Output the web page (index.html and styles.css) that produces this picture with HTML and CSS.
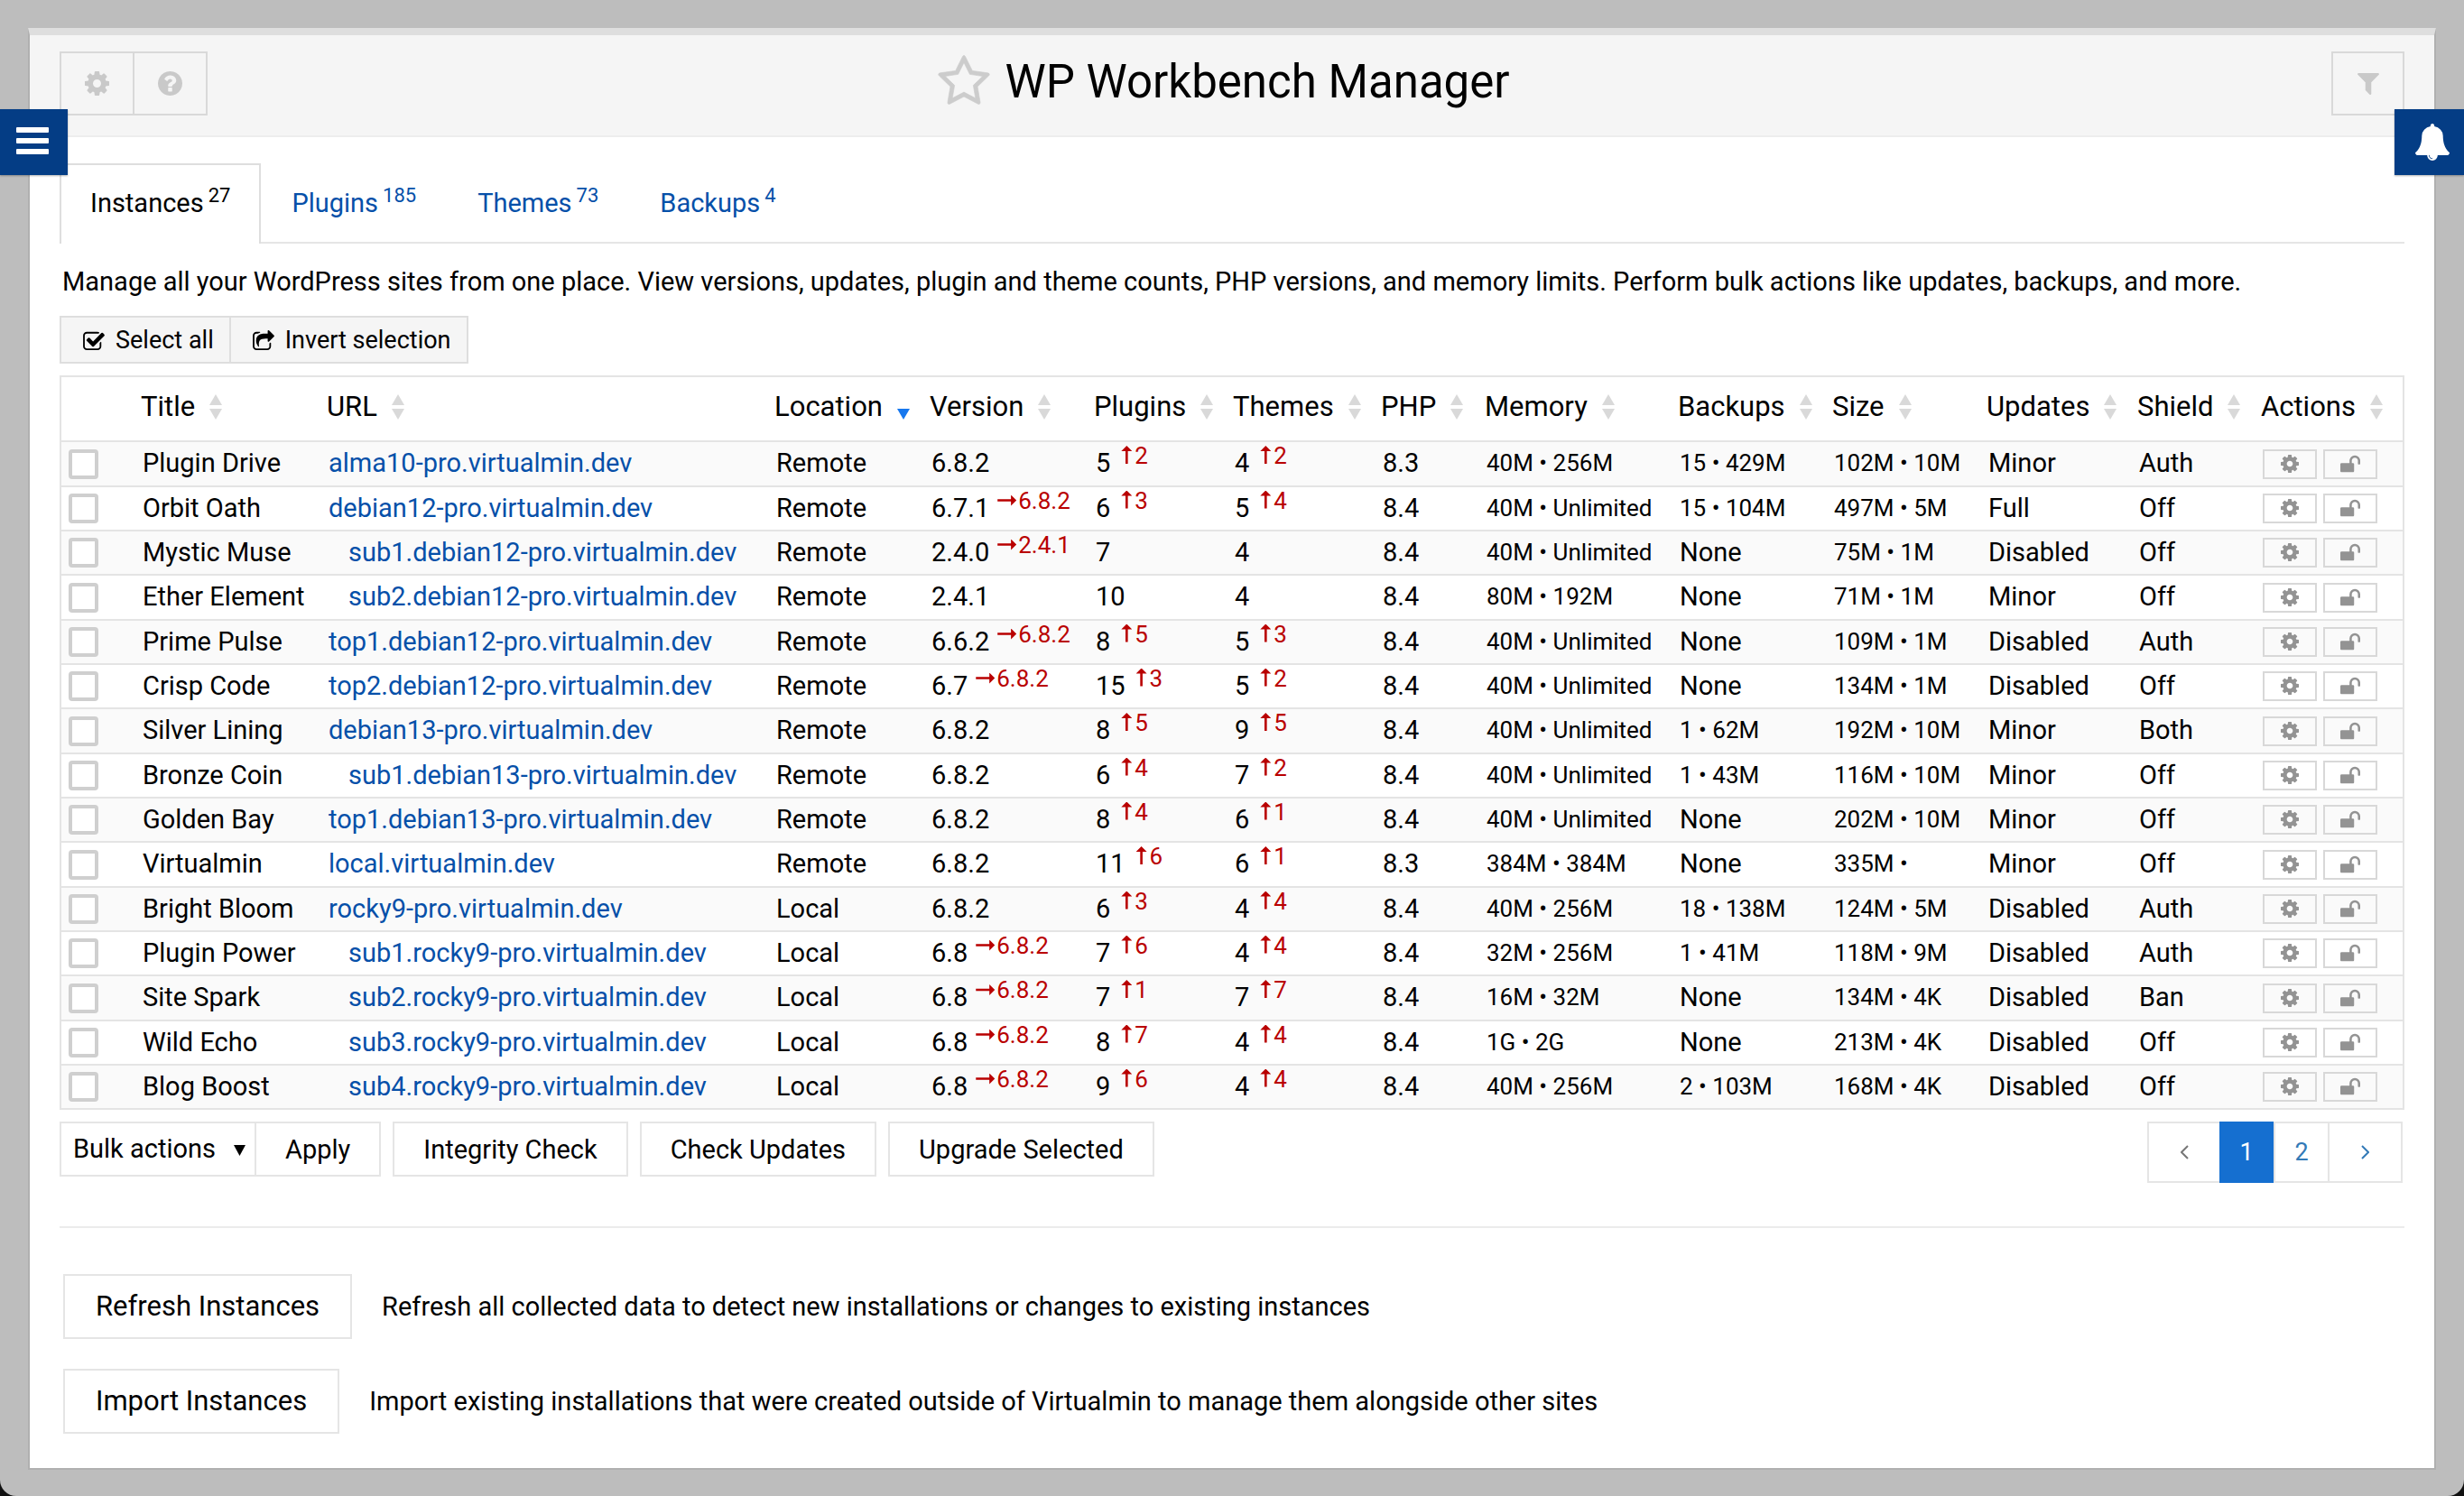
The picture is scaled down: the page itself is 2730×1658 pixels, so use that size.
FILE: index.html
```html
<!DOCTYPE html>
<html lang="en">
<head>
<meta charset="utf-8">
<title>WP Workbench Manager</title>
<link rel="stylesheet" href="styles.css">
</head>
<body>
<svg class="sprite" aria-hidden="true">
  <symbol id="cog" viewBox="0 128 1536 1536"><path fill-rule="evenodd" d="M1024 896q0 106-75 181t-181 75-181-75-75-181 75-181 181-75 181 75 75 181zm512-109v222q0 12-8 23t-20 13l-185 28q-19 54-39 91 35 50 107 138 10 12 10 25t-9 23q-27 37-99 108t-94 71q-12 0-26-9l-138-108q-44 23-91 38-16 136-29 186-7 28-36 28h-222q-14 0-24.5-8.5t-11.500-21.500l-28-184q-49-16-90-37l-141 107q-10 9-25 9-14 0-25-11-126-114-165-168-7-10-7-23 0-12 8-23 15-21 51-66.500t54-70.500q-27-50-41-99l-183-27q-13-2-21-12.500t-8-23.500v-222q0-12 8-23t19-13l186-28q14-46 39-92-40-57-107-138-10-12-10-24 0-10 9-23 26-36 98.500-107.500t94.500-71.500q13 0 26 10l138 107q44-23 91-38 16-136 29-186 7-28 36-28h222q14 0 24.500 8.500t11.500 21.500l28 184q49 16 90 37l142-107q9-9 24-9 13 0 25 10 129 119 165 170 7 8 7 22 0 12-8 23-15 21-51 66.500t-54 70.500q26 50 41 98l183 28q13 2 21 12.500t8 23.500z"/></symbol>
  <symbol id="help" viewBox="128 128 1536 1536"><path d="M1024 1376v-192q0-14-9-23t-23-9h-192q-14 0-23 9t-9 23v192q0 14 9 23t23 9h192q14 0 23-9t9-23zm256-672q0-88-55.500-163t-138.500-116-170-41q-243 0-371 213-15 24 8 42l132 100q7 6 19 6 16 0 25-12 53-68 86-92 34-24 86-24 48 0 85.500 26t37.500 59q0 38-20 61t-68 45q-63 28-115.500 86.500t-52.500 125.500v36q0 14 9 23t23 9h192q14 0 23-9t9-23q0-19 21.500-49.500t54.500-49.500q32-18 49-28.500t46-35 44.500-48 28-60.500 12.500-81zm384 192q0 209-103 385.500t-279.500 279.500-385.500 103-385.500-103-279.500-279.500-103-385.500 103-385.500 279.500-279.500 385.500-103 385.500 103 279.500 279.500 103 385.500z"/></symbol>
  <symbol id="filter" viewBox="192 256 1408 1408"><path d="M1595 295q17 41-14 70l-493 493v742q0 42-39 59-13 5-25 5-27 0-45-19l-256-256q-19-19-19-45v-486l-493-493q-31-29-14-70 17-39 59-39h1280q42 0 59 39z"/></symbol>
  <symbol id="bell" viewBox="64 0 1664 1792"><path d="M912 1696q0-16-16-16-59 0-101.500-42.500t-42.500-101.500q0-16-16-16t-16 16q0 73 51.500 124.500t124.500 51.500q16 0 16-16zm816-288q0 52-38 90t-90 38h-448q0 106-75 181t-181 75-181-75-75-181h-448q-52 0-90-38t-38-90q50-42 91-88t85-119.500 74.500-158.500 50-206 19.500-260q0-152 117-282.500t307-158.500q-8-19-8-39 0-40 28-68t68-28 68 28 28 68q0 20-8 39 190 28 307 158.500t117 282.500q0 139 19.500 260t50 206 74.500 158.500 85 119.500 91 88z"/></symbol>
  <symbol id="unlock" viewBox="64 128 1664 1408"><path d="M1728 576v256q0 26-19 45t-45 19h-64q-26 0-45-19t-19-45v-256q0-106-75-181t-181-75-181 75-75 181v192h96q40 0 68 28t28 68v576q0 40-28 68t-68 28h-960q-40 0-68-28t-28-68v-576q0-40 28-68t68-28h672v-192q0-185 131.500-316.500t316.500-131.500 316.500 131.500 131.500 316.500z"/></symbol>
  <symbol id="check" viewBox="64 0 1664 1536"><path d="M1472 930v318q0 119-84.500 203.500t-203.500 84.500h-832q-119 0-203.500-84.500t-84.500-203.500v-832q0-119 84.500-203.500t203.500-84.500h832q63 0 117 25 15 7 18 23 3 17-9 29l-49 49q-10 10-23 10-3 0-9-2-23-6-45-6h-832q-66 0-113 47t-47 113v832q0 66 47 113t113 47h832q66 0 113-47t47-113v-254q0-13 9-22l64-64q10-10 23-10 6 0 12 3 20 8 20 29zm231-489l-814 814q-24 24-57 24t-57-24l-430-430q-24-24-24-57t24-57l110-110q24-24 57-24t57 24l263 263 647-647q24-24 57-24t57 24l110 110q24 24 24 57t-24 57z"/></symbol>
  <symbol id="share" viewBox="64 0 1664 1536"><path d="M1472 989v259q0 119-84.500 203.500t-203.500 84.500h-832q-119 0-203.500-84.500t-84.500-203.500v-832q0-119 84.500-203.500t203.500-84.500h255q13 0 22.500 9.500t9.500 22.500q0 27-26 32-77 26-133 60-10 4-16 4h-112q-66 0-113 47t-47 113v832q0 66 47 113t113 47h832q66 0 113-47t47-113v-214q0-19 18-29 28-13 54-37 16-16 35-8 21 9 21 31zm237-496l-384 384q-18 19-45 19-12 0-25-5-39-17-39-59v-192h-160q-323 0-438 131-119 137-74 473 3 23-20 34-8 2-12 2-16 0-26-13-10-14-21-31t-39.500-68.500-49.500-99.500-38.500-114-17.500-122q0-49 3.500-91t14-90 28-88 47-81.500 68.500-74 94.500-61.500 124.500-48.500 159.500-30.500 196.500-11h160v-192q0-42 39-59 13-5 25-5 26 0 45 19l384 384q19 19 19 45t-19 45z"/></symbol>
  <symbol id="star" viewBox="48 16 1696 1619"><path d="M1201 1004l306-297-422-62-189-382-189 382-422 62 306 297-73 421 378-199 377 199zm527-357q0 22-26 48l-363 354 86 500q1 7 1 20 0 50-41 50-19 0-40-12l-449-236-449 236q-22 12-40 12-21 0-31.500-14.500t-10.500-35.500q0-6 2-20l86-500-364-354q-25-27-25-48 0-37 56-46l502-73 225-455q19-41 49-41t49 41l225 455 502 73q56 9 56 46z" stroke="currentColor" stroke-width="20"/></symbol>
  <symbol id="sort" viewBox="0 0 14 28"><path d="M7 0l7 12H0z"/><path d="M0 16h14L7 28z"/></symbol>
  <symbol id="sort-down" viewBox="0 0 14 28"><path d="M0 16h14L7 28z"/></symbol>
</svg>

<button class="side side-menu" type="button" aria-label="Menu"><span></span><span></span><span></span></button>
<button class="side side-bell" type="button" aria-label="Notifications"><svg><use href="#bell"/></svg></button>

<div class="panel">
  <header class="head">
    <div class="head-tools">
      <button type="button" aria-label="Settings"><svg><use href="#cog"/></svg></button>
      <button type="button" aria-label="Help"><svg><use href="#help"/></svg></button>
    </div>
    <h1><svg class="star"><use href="#star"/></svg>WP Workbench Manager</h1>
    <div class="head-tools head-right">
      <button type="button" aria-label="Filter"><svg class="funnel"><use href="#filter"/></svg></button>
    </div>
  </header>

  <main>
    <nav class="tabs">
      <a class="active" href="#instances">Instances<sup>27</sup></a>
      <a href="#plugins">Plugins<sup>185</sup></a>
      <a href="#themes">Themes<sup>73</sup></a>
      <a href="#backups">Backups<sup>4</sup></a>
    </nav>

    <p class="intro">Manage all your WordPress sites from one place. View versions, updates, plugin and theme counts, PHP versions, and memory limits. Perform bulk actions like updates, backups, and more.</p>

    <div class="select-bar">
      <button type="button"><svg><use href="#check"/></svg>Select all</button>
      <button type="button"><svg><use href="#share"/></svg>Invert selection</button>
    </div>

    <table class="grid">
      <colgroup>
        <col class="c-check"><col class="c-title"><col class="c-url"><col class="c-location"><col class="c-version"><col class="c-plugins"><col class="c-themes"><col class="c-php"><col class="c-memory"><col class="c-backups"><col class="c-size"><col class="c-updates"><col class="c-shield"><col class="c-actions">
      </colgroup>
      <thead>
        <tr>
          <td></td>
          <th><button type="button">Title<svg><use href="#sort"/></svg></button></th>
          <th><button type="button">URL<svg><use href="#sort"/></svg></button></th>
          <th><button type="button">Location<svg class="sorted"><use href="#sort-down"/></svg></button></th>
          <th><button type="button">Version<svg><use href="#sort"/></svg></button></th>
          <th><button type="button">Plugins<svg><use href="#sort"/></svg></button></th>
          <th><button type="button">Themes<svg><use href="#sort"/></svg></button></th>
          <th><button type="button">PHP<svg><use href="#sort"/></svg></button></th>
          <th><button type="button">Memory<svg><use href="#sort"/></svg></button></th>
          <th><button type="button">Backups<svg><use href="#sort"/></svg></button></th>
          <th><button type="button">Size<svg><use href="#sort"/></svg></button></th>
          <th><button type="button">Updates<svg><use href="#sort"/></svg></button></th>
          <th><button type="button">Shield<svg><use href="#sort"/></svg></button></th>
          <th><button type="button">Actions<svg><use href="#sort"/></svg></button></th>
        </tr>
      </thead>
      <tbody>
        <tr><td><input type="checkbox" aria-label="Plugin Drive"></td><td>Plugin Drive</td><td><a href="#s1">alma10-pro.virtualmin.dev</a></td><td>Remote</td><td>6.8.2</td><td>5<sup class="up">2</sup></td><td>4<sup class="up">2</sup></td><td>8.3</td><td class="sm">40M • 256M</td><td class="sm">15 • 429M</td><td class="sm">102M • 10M</td><td>Minor</td><td>Auth</td><td><div class="acts"><button type="button" aria-label="Configure"><svg><use href="#cog"/></svg></button><button type="button" aria-label="Unlock"><svg><use href="#unlock"/></svg></button></div></td></tr>
        <tr><td><input type="checkbox" aria-label="Orbit Oath"></td><td>Orbit Oath</td><td><a href="#s2">debian12-pro.virtualmin.dev</a></td><td>Remote</td><td>6.7.1<sup class="to">6.8.2</sup></td><td>6<sup class="up">3</sup></td><td>5<sup class="up">4</sup></td><td>8.4</td><td class="sm">40M • Unlimited</td><td class="sm">15 • 104M</td><td class="sm">497M • 5M</td><td>Full</td><td>Off</td><td><div class="acts"><button type="button" aria-label="Configure"><svg><use href="#cog"/></svg></button><button type="button" aria-label="Unlock"><svg><use href="#unlock"/></svg></button></div></td></tr>
        <tr><td><input type="checkbox" aria-label="Mystic Muse"></td><td>Mystic Muse</td><td class="sub"><a href="#s3">sub1.debian12-pro.virtualmin.dev</a></td><td>Remote</td><td>2.4.0<sup class="to">2.4.1</sup></td><td>7</td><td>4</td><td>8.4</td><td class="sm">40M • Unlimited</td><td>None</td><td class="sm">75M • 1M</td><td>Disabled</td><td>Off</td><td><div class="acts"><button type="button" aria-label="Configure"><svg><use href="#cog"/></svg></button><button type="button" aria-label="Unlock"><svg><use href="#unlock"/></svg></button></div></td></tr>
        <tr><td><input type="checkbox" aria-label="Ether Element"></td><td>Ether Element</td><td class="sub"><a href="#s4">sub2.debian12-pro.virtualmin.dev</a></td><td>Remote</td><td>2.4.1</td><td>10</td><td>4</td><td>8.4</td><td class="sm">80M • 192M</td><td>None</td><td class="sm">71M • 1M</td><td>Minor</td><td>Off</td><td><div class="acts"><button type="button" aria-label="Configure"><svg><use href="#cog"/></svg></button><button type="button" aria-label="Unlock"><svg><use href="#unlock"/></svg></button></div></td></tr>
        <tr><td><input type="checkbox" aria-label="Prime Pulse"></td><td>Prime Pulse</td><td><a href="#s5">top1.debian12-pro.virtualmin.dev</a></td><td>Remote</td><td>6.6.2<sup class="to">6.8.2</sup></td><td>8<sup class="up">5</sup></td><td>5<sup class="up">3</sup></td><td>8.4</td><td class="sm">40M • Unlimited</td><td>None</td><td class="sm">109M • 1M</td><td>Disabled</td><td>Auth</td><td><div class="acts"><button type="button" aria-label="Configure"><svg><use href="#cog"/></svg></button><button type="button" aria-label="Unlock"><svg><use href="#unlock"/></svg></button></div></td></tr>
        <tr><td><input type="checkbox" aria-label="Crisp Code"></td><td>Crisp Code</td><td><a href="#s6">top2.debian12-pro.virtualmin.dev</a></td><td>Remote</td><td>6.7<sup class="to">6.8.2</sup></td><td>15<sup class="up">3</sup></td><td>5<sup class="up">2</sup></td><td>8.4</td><td class="sm">40M • Unlimited</td><td>None</td><td class="sm">134M • 1M</td><td>Disabled</td><td>Off</td><td><div class="acts"><button type="button" aria-label="Configure"><svg><use href="#cog"/></svg></button><button type="button" aria-label="Unlock"><svg><use href="#unlock"/></svg></button></div></td></tr>
        <tr><td><input type="checkbox" aria-label="Silver Lining"></td><td>Silver Lining</td><td><a href="#s7">debian13-pro.virtualmin.dev</a></td><td>Remote</td><td>6.8.2</td><td>8<sup class="up">5</sup></td><td>9<sup class="up">5</sup></td><td>8.4</td><td class="sm">40M • Unlimited</td><td class="sm">1 • 62M</td><td class="sm">192M • 10M</td><td>Minor</td><td>Both</td><td><div class="acts"><button type="button" aria-label="Configure"><svg><use href="#cog"/></svg></button><button type="button" aria-label="Unlock"><svg><use href="#unlock"/></svg></button></div></td></tr>
        <tr><td><input type="checkbox" aria-label="Bronze Coin"></td><td>Bronze Coin</td><td class="sub"><a href="#s8">sub1.debian13-pro.virtualmin.dev</a></td><td>Remote</td><td>6.8.2</td><td>6<sup class="up">4</sup></td><td>7<sup class="up">2</sup></td><td>8.4</td><td class="sm">40M • Unlimited</td><td class="sm">1 • 43M</td><td class="sm">116M • 10M</td><td>Minor</td><td>Off</td><td><div class="acts"><button type="button" aria-label="Configure"><svg><use href="#cog"/></svg></button><button type="button" aria-label="Unlock"><svg><use href="#unlock"/></svg></button></div></td></tr>
        <tr><td><input type="checkbox" aria-label="Golden Bay"></td><td>Golden Bay</td><td><a href="#s9">top1.debian13-pro.virtualmin.dev</a></td><td>Remote</td><td>6.8.2</td><td>8<sup class="up">4</sup></td><td>6<sup class="up">1</sup></td><td>8.4</td><td class="sm">40M • Unlimited</td><td>None</td><td class="sm">202M • 10M</td><td>Minor</td><td>Off</td><td><div class="acts"><button type="button" aria-label="Configure"><svg><use href="#cog"/></svg></button><button type="button" aria-label="Unlock"><svg><use href="#unlock"/></svg></button></div></td></tr>
        <tr><td><input type="checkbox" aria-label="Virtualmin"></td><td>Virtualmin</td><td><a href="#s10">local.virtualmin.dev</a></td><td>Remote</td><td>6.8.2</td><td>11<sup class="up">6</sup></td><td>6<sup class="up">1</sup></td><td>8.3</td><td class="sm">384M • 384M</td><td>None</td><td class="sm">335M •</td><td>Minor</td><td>Off</td><td><div class="acts"><button type="button" aria-label="Configure"><svg><use href="#cog"/></svg></button><button type="button" aria-label="Unlock"><svg><use href="#unlock"/></svg></button></div></td></tr>
        <tr><td><input type="checkbox" aria-label="Bright Bloom"></td><td>Bright Bloom</td><td><a href="#s11">rocky9-pro.virtualmin.dev</a></td><td>Local</td><td>6.8.2</td><td>6<sup class="up">3</sup></td><td>4<sup class="up">4</sup></td><td>8.4</td><td class="sm">40M • 256M</td><td class="sm">18 • 138M</td><td class="sm">124M • 5M</td><td>Disabled</td><td>Auth</td><td><div class="acts"><button type="button" aria-label="Configure"><svg><use href="#cog"/></svg></button><button type="button" aria-label="Unlock"><svg><use href="#unlock"/></svg></button></div></td></tr>
        <tr><td><input type="checkbox" aria-label="Plugin Power"></td><td>Plugin Power</td><td class="sub"><a href="#s12">sub1.rocky9-pro.virtualmin.dev</a></td><td>Local</td><td>6.8<sup class="to">6.8.2</sup></td><td>7<sup class="up">6</sup></td><td>4<sup class="up">4</sup></td><td>8.4</td><td class="sm">32M • 256M</td><td class="sm">1 • 41M</td><td class="sm">118M • 9M</td><td>Disabled</td><td>Auth</td><td><div class="acts"><button type="button" aria-label="Configure"><svg><use href="#cog"/></svg></button><button type="button" aria-label="Unlock"><svg><use href="#unlock"/></svg></button></div></td></tr>
        <tr><td><input type="checkbox" aria-label="Site Spark"></td><td>Site Spark</td><td class="sub"><a href="#s13">sub2.rocky9-pro.virtualmin.dev</a></td><td>Local</td><td>6.8<sup class="to">6.8.2</sup></td><td>7<sup class="up">1</sup></td><td>7<sup class="up">7</sup></td><td>8.4</td><td class="sm">16M • 32M</td><td>None</td><td class="sm">134M • 4K</td><td>Disabled</td><td>Ban</td><td><div class="acts"><button type="button" aria-label="Configure"><svg><use href="#cog"/></svg></button><button type="button" aria-label="Unlock"><svg><use href="#unlock"/></svg></button></div></td></tr>
        <tr><td><input type="checkbox" aria-label="Wild Echo"></td><td>Wild Echo</td><td class="sub"><a href="#s14">sub3.rocky9-pro.virtualmin.dev</a></td><td>Local</td><td>6.8<sup class="to">6.8.2</sup></td><td>8<sup class="up">7</sup></td><td>4<sup class="up">4</sup></td><td>8.4</td><td class="sm">1G • 2G</td><td>None</td><td class="sm">213M • 4K</td><td>Disabled</td><td>Off</td><td><div class="acts"><button type="button" aria-label="Configure"><svg><use href="#cog"/></svg></button><button type="button" aria-label="Unlock"><svg><use href="#unlock"/></svg></button></div></td></tr>
        <tr><td><input type="checkbox" aria-label="Blog Boost"></td><td>Blog Boost</td><td class="sub"><a href="#s15">sub4.rocky9-pro.virtualmin.dev</a></td><td>Local</td><td>6.8<sup class="to">6.8.2</sup></td><td>9<sup class="up">6</sup></td><td>4<sup class="up">4</sup></td><td>8.4</td><td class="sm">40M • 256M</td><td class="sm">2 • 103M</td><td class="sm">168M • 4K</td><td>Disabled</td><td>Off</td><td><div class="acts"><button type="button" aria-label="Configure"><svg><use href="#cog"/></svg></button><button type="button" aria-label="Unlock"><svg><use href="#unlock"/></svg></button></div></td></tr>
      </tbody>
    </table>

    <div class="bottom-bar">
      <div class="bulk">
        <div class="bulk-group">
          <div class="bulk-select">
            <select aria-label="Bulk actions"><option>Bulk actions</option></select>
            <svg viewBox="0 0 13 12"><path d="M0 0h13L6.500 12z"/></svg>
          </div>
          <button class="btn" type="button">Apply</button>
        </div>
        <button class="btn" type="button">Integrity Check</button>
        <button class="btn" type="button">Check Updates</button>
        <button class="btn" type="button">Upgrade Selected</button>
      </div>
      <nav class="pager" aria-label="Pages">
        <a class="off" href="#prev" aria-label="Previous"><svg viewBox="0 0 9 16"><path d="M8 1L1 8l7 7"/></svg></a>
        <a class="on" href="#p1">1</a>
        <a href="#p2">2</a>
        <a class="next" href="#next" aria-label="Next"><svg viewBox="0 0 9 16"><path d="M1 1l7 7-7 7"/></svg></a>
      </nav>
    </div>

    <hr>

    <div class="task">
      <button class="btn btn-lg" type="button">Refresh Instances</button>
      <p>Refresh all collected data to detect new installations or changes to existing instances</p>
    </div>
    <div class="task">
      <button class="btn btn-lg" type="button">Import Instances</button>
      <p>Import existing installations that were created outside of Virtualmin to manage them alongside other sites</p>
    </div>
  </main>
</div>
</body>
</html>
```
FILE: styles.css
```css
* { box-sizing: border-box; }

html { background: #111; }

body {
  margin: 0;
  min-height: 100vh;
  padding: 31px 31px 29px;
  display: flex;
  flex-direction: column;
  background: #bdbdbd;
  border-radius: 0 0 18px 18px;
  color: #000;
  font: 29px/40px Roboto, "Liberation Sans", sans-serif;
}

button, select { font: inherit; color: inherit; margin: 0; border-radius: 0; }
button { cursor: pointer; }
a { color: #0650a9; text-decoration: none; }
p, h1 { margin: 0; font-weight: 400; }
svg { fill: currentColor; display: block; flex: none; }
.sprite { position: absolute; width: 0; height: 0; }

/* Edge buttons that lie over the panel */
.side {
  position: absolute;
  top: 121px;
  height: 73px;
  padding: 0;
  border: 0;
  display: flex;
  align-items: center;
  justify-content: center;
  background: #043d85;
  color: #fff;
  box-shadow: 0 1px 2px rgba(0, 0, 0, .3);
}
.side-menu {
  left: 0;
  width: 75px;
  flex-direction: column;
  gap: 6px;
  padding: 0 4px 3px 0;
}
.side-menu span { width: 36px; height: 6px; border-radius: 1px; background: #fff; }
.side-bell { right: 0; width: 77px; padding: 0 0 0 6px; }
.side-bell svg { width: 38px; height: 41px; }

.panel {
  flex: 1;
  background: #fff;
  border: 2px solid #b0b0b0;
  border-top: 8px solid #dedede;
}

.head {
  display: grid;
  grid-template-columns: 1fr auto 1fr;
  align-items: start;
  padding: 18px 33px 22px;
  background: #f5f5f5;
  border-bottom: 2px solid #ededed;
}
.head-tools { display: flex; color: #c9c9c9; }
.head-right { justify-content: flex-end; }
.head-tools button {
  width: 83px;
  height: 71px;
  padding: 0;
  display: flex;
  align-items: center;
  justify-content: center;
  background: transparent;
  border: 2px solid #d9d9d9;
}
.head-tools button + button { margin-left: -2px; }
.head-right button { width: 81px; }
.head-tools svg { width: 27px; height: 27px; }
.head-tools .funnel { width: 24px; height: 24px; }
h1 {
  display: flex;
  align-items: center;
  gap: 16px;
  padding-right: 18px;
  font-size: 51px;
  line-height: 68px;
}
.star { width: 58px; height: 55px; margin-bottom: 6px; color: #ccc; }

main { padding: 29px 33px 37px; }

.tabs { display: flex; border-bottom: 2px solid #e5e5e5; }
.tabs a {
  height: 89px;
  margin-bottom: -2px;
  padding: 22px 32px 0;
  border: 2px solid transparent;
  border-bottom: 0;
}
.tabs .active { color: #000; background: #fff; border-color: #dedede; }
.tabs sup {
  margin-left: 5px;
  font-size: 22px;
  line-height: 0;
  vertical-align: 11px;
}

.intro { margin: 22px 0 18px 3px; }

.select-bar { display: flex; margin-bottom: 13px; }
.select-bar button {
  height: 53px;
  display: flex;
  align-items: center;
  gap: 12px;
  padding: 0 17px 0 24px;
  background: #f5f5f5;
  border: 2px solid #dedede;
  font-size: 27px;
  line-height: 32px;
}
.select-bar button + button { margin-left: -2px; }
.select-bar svg { width: 24px; height: 22px; }

/* Instances table */
.grid {
  width: 100%;
  table-layout: fixed;
  border: 2px solid #e4e4e4;
  border-bottom: 0;
  border-collapse: separate;
  border-spacing: 0;
  white-space: nowrap;
}
.c-check { width: 78px; }
.c-title { width: 206px; }
.c-url { width: 496px; }
.c-location { width: 172px; }
.c-version { width: 182px; }
.c-plugins { width: 154px; }
.c-themes { width: 164px; }
.c-php { width: 115px; }
.c-memory { width: 214px; }
.c-backups { width: 171px; }
.c-size { width: 171px; }
.c-updates { width: 167px; }
.c-shield { width: 137px; }
.c-actions { width: 167px; }

.grid th {
  height: 72px;
  padding: 0 0 4px 10px;
  font-weight: 400;
}
.grid th button {
  display: flex;
  align-items: center;
  gap: 16px;
  padding: 0;
  border: 0;
  background: none;
  font-size: 31px;
}
.grid th svg { width: 14px; height: 28px; color: #d9d9d9; }
.grid th .sorted { color: #1677ee; }
.grid th, .grid td { border-bottom: 2px solid #e4e4e4; }

.grid tbody tr { height: 49px; }
.grid tbody tr:nth-child(3n+1) { height: 50px; }
.grid tbody tr:nth-child(odd) { background: #fafafa; }
.grid td { padding: 0 0 2px 12px; }
.grid td:first-child { padding: 0 0 0 8px; }
.grid td:last-child { padding-bottom: 0; }
.grid .sub { padding-left: 34px; }
.grid .sm { font-size: 26px; }
.grid sup {
  color: #b90000;
  font-size: 26px;
  line-height: 0;
  vertical-align: 9px;
}
/* Arrows in front of the available updates */
.grid sup::before {
  content: "";
  display: inline-block;
  background: currentColor;
}
.grid .up::before {
  width: 12px;
  height: 20px;
  margin: 0 3px 0 12px;
  clip-path: polygon(50% 0, 100% 30%, 61% 30%, 61% 100%, 39% 100%, 39% 30%, 0 30%);
}
.grid .to::before {
  width: 21px;
  height: 12px;
  margin: 0 2px 3px 9px;
  clip-path: polygon(100% 50%, 71% 100%, 71% 60%, 0 60%, 0 40%, 71% 40%, 71% 0);
}
.grid input {
  appearance: none;
  display: block;
  width: 33px;
  height: 33px;
  margin: 0;
  border: 4px solid #cfcfcf;
  border-radius: 4px;
  background: #fff;
}
.acts { display: flex; gap: 7px; }
.acts button {
  width: 60px;
  height: 33px;
  padding: 0 0 1px;
  display: flex;
  align-items: center;
  justify-content: center;
  background: none;
  border: 2px solid #d8d8d8;
  color: #939393;
}
.acts svg { width: 22px; height: 20px; }

/* Bulk actions and pages */
.bottom-bar {
  display: flex;
  justify-content: space-between;
  align-items: flex-start;
  margin-top: 13px;
  padding-right: 2px;
}
.bulk { display: flex; gap: 13px; }
.bulk-group { display: flex; }
.bulk-select { position: relative; }
.bulk-select select {
  appearance: none;
  width: 218px;
  height: 61px;
  padding: 0 0 2px 13px;
  background: #fff;
  border: 2px solid #e5e5e5;
}
.bulk-select svg {
  position: absolute;
  right: 12px;
  top: 26px;
  width: 13px;
  height: 12px;
  pointer-events: none;
}
.btn {
  height: 61px;
  padding: 0 32px;
  background: #fff;
  border: 2px solid #e5e5e5;
}
.bulk-group .btn { margin-left: -2px; }

.pager { display: flex; font-size: 27px; }
.pager a {
  width: 62px;
  height: 68px;
  display: flex;
  align-items: center;
  justify-content: center;
  border: 2px solid #e5e5e5;
  color: #337ab7;
}
.pager .off { width: 80px; border-right: 0; color: #777; }
.pager .on { width: 60px; background: #156fd0; border-color: #156fd0; color: #fff; }
.pager .next { width: 81px; border-left: 0; }
.pager svg { width: 9px; height: 16px; fill: none; stroke: currentColor; stroke-width: 2; }

hr {
  width: 100%;
  height: 2px;
  margin: 48px 0 51px;
  border: 0;
  background: #ebebeb;
}

.task { display: flex; align-items: center; gap: 33px; margin: 0 0 33px 4px; }
.task:last-child { margin-bottom: 0; }
.btn-lg { height: 72px; padding: 0 34px; font-size: 31px; }
```
